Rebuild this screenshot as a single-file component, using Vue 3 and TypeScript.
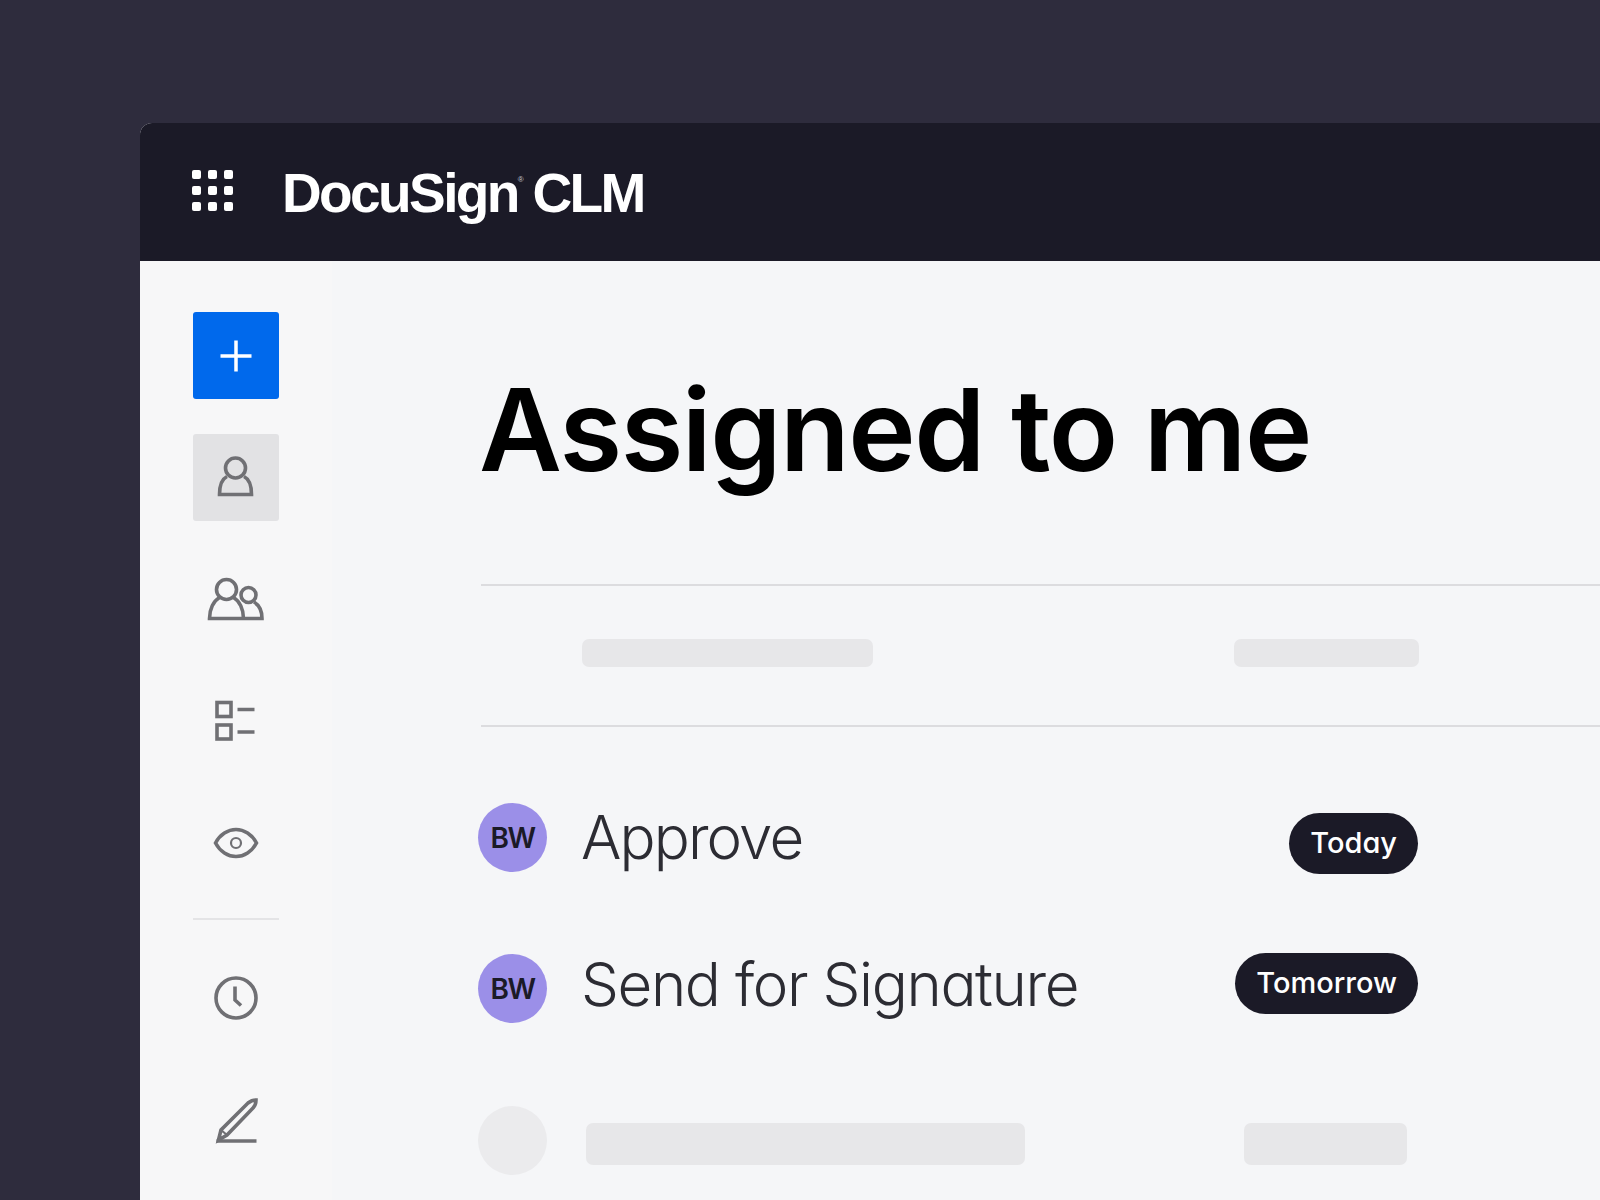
<script setup lang="ts">
const dots = Array.from({ length: 9 }, (_, i) => i);

const rows = [
  { id: 1, label: 'Approve', due: 'Today', shift: 'down' },
  { id: 2, label: 'Send for Signature', due: 'Tomorrow', shift: 'up' },
];
</script>

<template>
  <div class="page">
    <div class="window">
      <header class="topbar">
        <div class="apps">
          <span v-for="d in dots" :key="d" class="dot"></span>
        </div>
        <div class="brand">DocuSign<sup class="reg">®</sup> CLM</div>
      </header>

      <div class="body">
        <aside class="sidebar">
          <button class="nav add">
            <svg width="64" height="64" viewBox="0 0 64 64" class="plus">
              <path d="M32 16.5v31M16.5 32h31" />
            </svg>
          </button>
          <button class="nav active">
            <svg width="64" height="64" viewBox="0 0 64 64">
              <circle cx="31.5" cy="22" r="10" />
              <path d="M23 30.500C18 33 15.500 39 15.500 48.500H47.500C47.500 39 45 33 40 30.500" />
            </svg>
          </button>
          <button class="nav">
            <svg width="64" height="64" viewBox="0 0 64 64">
              <circle cx="22.500" cy="21.500" r="10" />
              <circle cx="44.500" cy="27" r="7.500" />
              <path d="M15.500 29.500C9.500 33 5.500 41 5.500 50.500H58C58 43 55 37 50 34M29.500 29.500C35.500 33 39.500 41 39.500 50.500" />
            </svg>
          </button>
          <button class="nav">
            <svg width="64" height="64" viewBox="0 0 64 64">
              <rect x="13" y="12.500" width="14" height="14" />
              <rect x="13" y="35" width="14" height="14" />
              <path d="M33.500 19.500h17M33.500 42h17" />
            </svg>
          </button>
          <button class="nav">
            <svg width="64" height="64" viewBox="0 0 64 64">
              <path d="M11.500 31C16 22.500 24 17.500 32 17.500S48 22.500 52.500 31C48 39.500 40 44.500 32 44.500S16 39.500 11.500 31Z" />
              <circle cx="32" cy="31" r="5" class="thin" />
            </svg>
          </button>
          <div class="nav-rule"></div>
          <button class="nav">
            <svg width="64" height="64" viewBox="0 0 64 64">
              <circle cx="32" cy="32" r="20" />
              <path d="M31 20.500V34L37 39.500" />
            </svg>
          </button>
          <button class="nav">
            <svg width="64" height="64" viewBox="0 0 64 64">
              <path d="M12.500 53h40" />
              <path d="M14.500 52L17 42 44 15C47 12.500 50 12 52 12 52 15 51 18 49 20L23 47Z" />
              <path d="M17 42L23 47" class="thin" />
            </svg>
          </button>
        </aside>

        <main class="content">
          <h1 class="title">Assigned to me</h1>

          <div class="table-head">
            <div class="skel head-name"></div>
            <div class="skel head-due"></div>
          </div>

          <div class="list">
            <div v-for="row in rows" :key="row.id" class="row">
              <div class="avatar">BW</div>
              <div class="label" :class="row.shift">{{ row.label }}</div>
              <div class="pill" :class="row.shift">{{ row.due }}</div>
            </div>
            <div class="row last">
              <div class="avatar blank"></div>
              <div class="skel bar-name"></div>
              <div class="skel bar-due"></div>
            </div>
          </div>
        </main>
      </div>
    </div>
  </div>
</template>

<style>
html,
body {
  margin: 0;
  background: #2e2c3d;
}
</style>

<style scoped>
.page {
  width: 1600px;
  height: 1200px;
  box-sizing: border-box;
  padding: 123px 0 0 140px;
  background: #2e2c3d;
  overflow: hidden;
}

.window {
  height: 1077px;
  border-top-left-radius: 12px;
  overflow: hidden;
  display: flex;
  flex-direction: column;
  background: #f5f6f8;
}

.topbar {
  flex: none;
  height: 138px;
  background: #1b1a27;
  display: flex;
  align-items: center;
  padding-left: 52px;
}

.apps {
  display: grid;
  grid-template-columns: repeat(3, 9px);
  grid-auto-rows: 9px;
  gap: 7px;
  margin-top: -3px;
}

.dot {
  background: #fff;
  border-radius: 2px;
}

.brand {
  margin-left: 49px;
  margin-top: 2px;
  font-family: "Liberation Sans", Arial, sans-serif;
  font-weight: 700;
  font-size: 55px;
  letter-spacing: -2.6px;
  word-spacing: -4px;
  color: #fff;
  white-space: nowrap;
}

.reg {
  font-size: 8px;
  letter-spacing: 0;
  font-weight: 400;
  vertical-align: 30px;
  line-height: 0;
  color: #c9c9cf;
}

.body {
  flex: 1;
  display: flex;
  min-height: 0;
}

.sidebar {
  flex: none;
  width: 192px;
  box-sizing: border-box;
  padding: 51px 0 0 53px;
  background: #f7f7f8;
  display: flex;
  flex-direction: column;
}

.nav {
  flex: none;
  width: 86px;
  height: 87px;
  margin: 0 0 35px;
  padding: 0;
  border: none;
  border-radius: 3px;
  background: transparent;
  display: flex;
  align-items: center;
  justify-content: center;
}

.add {
  background: #0069ec;
}

.active {
  background: #e2e2e4;
}

.nav svg {
  fill: none;
  stroke: #707074;
  stroke-width: 3.6;
}

.nav svg .thin {
  stroke-width: 2.2;
}

.nav svg.plus {
  stroke: #fff;
  stroke-width: 3.5;
}

.nav-rule {
  flex: none;
  width: 86px;
  height: 2px;
  margin: -4px 0 34px;
  background: #e4e4e6;
}

.content {
  flex: 1;
  min-width: 0;
  padding-left: 149px;
  font-family: Inter, "Liberation Sans", sans-serif;
  font-feature-settings: "cv11";
}

.title {
  margin: 0 0 0 -2px;
  height: 323px;
  box-sizing: border-box;
  padding-top: 100px;
  font-family: Inter, "Liberation Sans", sans-serif;
  font-feature-settings: normal;
  font-size: 114px;
  line-height: 138px;
  font-weight: 600;
  letter-spacing: -1.5px;
  color: #000;
  white-space: nowrap;
}

.table-head {
  height: 143px;
  box-sizing: border-box;
  border-top: 2px solid #dcdcdf;
  border-bottom: 2px solid #dcdcdf;
  padding: 53px 181px 0 101px;
  display: flex;
  justify-content: space-between;
  align-items: flex-start;
}

.skel {
  flex: none;
  background: #e7e7e9;
  border-radius: 7px;
}

.head-name {
  width: 291px;
  height: 28px;
}

.head-due {
  width: 185px;
  height: 28px;
}

.list {
  margin-left: -3px;
  padding: 76px 182px 0 0;
  display: flex;
  flex-direction: column;
  gap: 82px;
}

.row {
  height: 69px;
  display: flex;
  align-items: center;
}

.row.last {
  margin-top: 1px;
}

.avatar {
  flex: none;
  width: 69px;
  height: 69px;
  border-radius: 50%;
  background: #9b8fe8;
  color: #1b1a27;
  display: flex;
  align-items: center;
  justify-content: center;
  font-size: 28px;
  font-weight: 600;
  letter-spacing: -1.5px;
}

.avatar.blank {
  background: #ebebed;
}

.label {
  margin-left: 34px;
  flex: 1;
  font-size: 60px;
  font-weight: 300;
  letter-spacing: -1.5px;
  color: #2c2c33;
  white-space: nowrap;
  line-height: 69px;
}

.label.up {
  margin-top: -8px;
  letter-spacing: -1.4px;
}

.label.down {
  letter-spacing: -1.9px;
}

.pill {
  flex: none;
  height: 61px;
  box-sizing: border-box;
  padding: 0 21px 3px;
  border-radius: 31px;
  background: #1b1a27;
  color: #fff;
  display: flex;
  align-items: center;
  font-size: 29px;
  font-weight: 500;
}

.pill.down {
  margin-top: 12px;
}

.pill.up {
  margin-top: 0;
  margin-bottom: 10px;
}

.bar-name {
  margin: 6px 0 0 39px;
  width: 439px;
  height: 42px;
}

.bar-due {
  margin: 6px 11px 0 auto;
  width: 163px;
  height: 42px;
}
</style>
